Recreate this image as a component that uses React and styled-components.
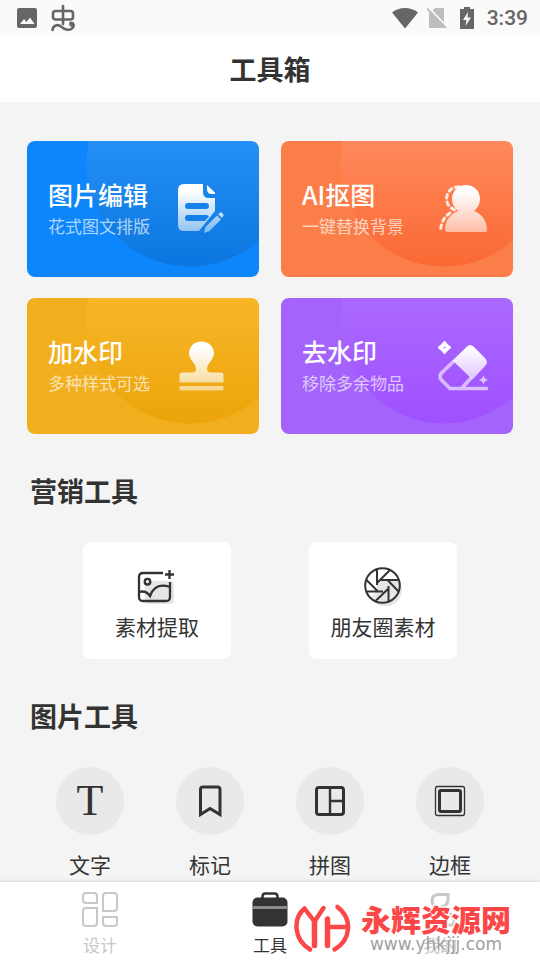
import React, { useState } from "react";
import styled, { createGlobalStyle } from "styled-components";

const features = [
  {
    title: "图片编辑",
    text: "花式图文排版",
    base: "#0e86fb",
    from: "#248ff5",
    to: "#0b76df",
    icon: "document"
  },
  {
    title: "AI抠图",
    text: "一键替换背景",
    base: "#fb7e49",
    from: "#ff895c",
    to: "#fa6933",
    icon: "person"
  },
  {
    title: "加水印",
    text: "多种样式可选",
    base: "#f1af1e",
    from: "#f8b628",
    to: "#eba40a",
    icon: "stamp"
  },
  {
    title: "去水印",
    text: "移除多余物品",
    base: "#a464fb",
    from: "#ab69ff",
    to: "#9f50ff",
    icon: "eraser"
  }
];

const featureIcons = {
  document: (
    <>
      <path
        fillRule="evenodd"
        d="M9 7H28V15Q28 21 34 21H40V34L24 54H9Q3 54 3 48V13Q3 7 9 7ZM13 26A3 3 0 0 0 13 32H31A3 3 0 0 0 31 26ZM13 38A3 3 0 0 0 13 44H30L34 39.5L32 38Z"
      />
      <path d="M32 8L40 15.5V17H37Q32 17 32 12Z" />
      <path d="M29 56L30.5 50L42 38.5L46 42.5L34.5 54Z" opacity="0.9" />
      <path d="M43.3 37.2L45 35.5Q46 35 47 36L48.5 37.5Q49 38.5 48 39.5L46.8 41Z" />
    </>
  ),
  person: (
    <>
      <path d="M37 8C45 8 51 14 51 22C51 27 49 31 45 34C53 37 58 44 58 53Q58 55 56 55H18Q16 55 16 53C16 44 21 37 29 34C25 31 23 27 23 22C23 14 29 8 37 8Z" />
      <path
        d="M30 9.8C22 10 17.7 15 17.7 22C17.7 27 20.5 31 27 33.5M21 36C15 40 12 46 11.5 54"
        fill="none"
        stroke="#fff"
        strokeWidth="3"
        strokeDasharray="3.5 4"
        strokeLinecap="round"
        opacity="0.85"
      />
    </>
  ),
  stamp: (
    <>
      <path d="M26.5 7.5C34 7.5 39 13 39 19.5C39 26 32 29 32 35Q32 38.5 36 38.5H46Q48.5 38.5 48.5 41V48.5H4.5V41Q4.5 38.5 7 38.5H17Q21 38.5 21 35C21 29 14 26 14 19.5C14 13 19 7.5 26.5 7.5Z" />
      <rect x="4.5" y="52" width="44" height="4.5" rx="1" />
    </>
  ),
  eraser: (
    <>
      <path d="M38 12.5Q41 9.5 44.5 12.5L56 24Q59.5 28 56.5 31.5L43.5 45.5L23.5 26.5Z" />
      <path
        fillRule="evenodd"
        d="M15.5 7L18.5 10.5L22 13.5L18.5 16.5L15.5 20L12.5 16.5L9 13.5L12.5 10.5ZM15.5 12L14 13.5L15.5 15L17 13.5Z"
        stroke="#fff"
        strokeWidth="1"
        strokeLinejoin="round"
      />
      <path
        d="M24 28L12.5 39Q9.5 42.5 12.5 46L21 54.5H57.5M32.5 54.5L41.5 44.5"
        fill="none"
        stroke="#fff"
        strokeWidth="3.6"
        strokeLinecap="round"
        opacity="0.6"
      />
      <path d="M54.5 41.5L56 44.5L59 46L56 47.5L54.5 50.5L53 47.5L50 46L53 44.5Z" />
    </>
  )
};

const FeatureCard = ({ title, text, base, from, to, icon }) => (
  <Card $base={base} $from={from} $to={to}>
    <CardText>
      <CardTitle>{title}</CardTitle>
      <CardSubtitle>{text}</CardSubtitle>
    </CardText>
    <svg width="64" height="64" viewBox="0 0 64 64" aria-hidden="true">
      <defs>
        <linearGradient
          id={`fade-${icon}`}
          gradientUnits="userSpaceOnUse"
          x1="0"
          y1="14"
          x2="0"
          y2="58"
        >
          <stop offset="0" stopColor="#fff" />
          <stop offset="1" stopColor="#fff" stopOpacity="0.5" />
        </linearGradient>
      </defs>
      <g fill={`url(#fade-${icon})`}>{featureIcons[icon]}</g>
    </svg>
  </Card>
);

const ImagePlusIcon = () => (
  <svg width="40" height="40" viewBox="0 0 40 40" aria-hidden="true">
    <rect x="8" y="15" width="29" height="23" rx="4" fill="#e6e6e6" />
    <g fill="none" stroke="#333" strokeWidth="2.3">
      <path d="M26 7H6Q2 7 2 11V31Q2 35 6 35H29Q33 35 33 31V16" />
      <circle cx="10.5" cy="15.7" r="2.8" />
      <path d="M2 26Q9 24 13 30Q18 16 33 21M32.5 4V13M28 8.5H37" />
    </g>
  </svg>
);

const ApertureIcon = () => (
  <svg width="40" height="40" viewBox="0 0 40 40" aria-hidden="true">
    <circle cx="22.5" cy="24" r="16.5" fill="#e6e6e6" />
    <circle cx="19.5" cy="19.5" r="17.3" fill="#fff" />
    <path d="M14 14L27 13L36 14A17 17 0 0 1 19 36L8 31L14 25Z" fill="#e6e6e6" />
    <g fill="none" stroke="#333" strokeWidth="2">
      <circle cx="19.5" cy="19.5" r="17.3" />
      <path d="M14 3.5V19M18 14H36M25.5 20V35.5M3.5 25.5H20M26.5 4.5L14 17M36 26L24.5 14M12.5 35L25.5 22.5M3 13.5L15 25.5" />
    </g>
  </svg>
);

const toolIcons = {
  bookmark: (
    <path
      d="M10.5 4H25.500Q28 4 28 6.500V31.500L18 25.500L8.500 31.500V6.500Q8.500 4 11 4Z"
      strokeWidth="3"
    />
  ),
  collage: (
    <>
      <rect x="4.5" y="4.5" width="27" height="27" rx="2.5" strokeWidth="3" />
      <path d="M18 4V32M18 18H32" strokeWidth="2.4" />
    </>
  ),
  frame: (
    <>
      <rect x="3.5" y="3.5" width="29" height="29" rx="2" strokeWidth="1.3" />
      <rect x="7.5" y="7.5" width="21" height="21" rx="1.5" strokeWidth="3" />
    </>
  )
};

const tools = [
  { label: "文字", icon: "text" },
  { label: "标记", icon: "bookmark" },
  { label: "拼图", icon: "collage" },
  { label: "边框", icon: "frame" }
];

const Tool = ({ label, icon }) => (
  <ToolButton>
    <ToolCircle>
      {icon === "text" ? (
        <Letter>T</Letter>
      ) : (
        <svg
          width="36"
          height="36"
          viewBox="0 0 36 36"
          fill="none"
          stroke="#333"
          aria-hidden="true"
        >
          {toolIcons[icon]}
        </svg>
      )}
    </ToolCircle>
    <span>{label}</span>
  </ToolButton>
);

const navItems = [
  {
    label: "设计",
    icon: (
      <g fill="none" stroke="currentColor" strokeWidth="2">
        <path d="M4 2H12Q15 2 15 5V12H4Q1 12 1 9V5Q1 2 4 2Z" />
        <path d="M24 2H32Q35 2 35 5V17Q35 20 32 20H21V5Q21 2 24 2Z" />
        <path d="M4 17H15V32Q15 35 12 35H4Q1 35 1 32V20Q1 17 4 17Z" />
        <path d="M21 26H35V32Q35 35 32 35H24Q21 35 21 32Z" />
      </g>
    )
  },
  {
    label: "工具",
    icon: (
      <>
        <path
          d="M10.500 8V5.500Q10.500 2.500 13.500 2.500H22.500Q25.500 2.500 25.500 5.500V8"
          fill="none"
          stroke="currentColor"
          strokeWidth="2.5"
        />
        <rect x="0.5" y="6.5" width="35" height="29" rx="5" fill="currentColor" />
        <path d="M0.5 16.5H35.5" stroke="#8c8c8c" strokeWidth="3" />
      </>
    )
  },
  {
    label: "我的",
    icon: (
      <g fill="none" stroke="currentColor" strokeWidth="3">
        <path d="M26 3.5H17Q10 3.5 10 9.5Q10 16 17.5 16Q26 16 26 8Z" />
        <path d="M5 34V29Q5 22 12 22H24Q32 22 32 29V34Z" />
      </g>
    )
  }
];

const Watermark = () => (
  <WatermarkBox>
    <svg
      width="58"
      height="50"
      viewBox="0 0 58 50"
      fill="none"
      stroke="#fb4747"
      strokeWidth="4.5"
      strokeLinecap="round"
      strokeLinejoin="round"
      aria-hidden="true"
    >
      <path d="M16 46.5C-1 36 -1 15 10.5 5.5L20.5 18.5L29.5 5" />
      <path d="M20.5 18.5V42.5M33.5 16V42.5" strokeWidth="5.5" />
      <path d="M33.5 24H53M43.5 4C59 16 57 37 40.5 46.5" />
    </svg>
    <WatermarkText>
      <WatermarkName>永辉资源网</WatermarkName>
      <WatermarkUrl>www.yhkjjj.com</WatermarkUrl>
    </WatermarkText>
  </WatermarkBox>
);

const StatusBar = () => (
  <Status>
    <StatusGroup $gap={14}>
      <svg width="20" height="20" viewBox="0 0 20 20" aria-hidden="true">
        <rect width="20" height="20" rx="2" fill="#666" />
        <path d="M3 16L7 11L9.500 14L13 9.500L17.500 16Z" fill="#fafafa" />
      </svg>
      <svg
        width="25"
        height="28"
        viewBox="0 0 25 28"
        fill="none"
        stroke="#666"
        strokeWidth="2.6"
        strokeLinecap="round"
        aria-hidden="true"
      >
        <rect x="2" y="7" width="20" height="8.5" rx="2.5" />
        <path d="M12 2V20M1.500 26C2 21 7 20 10 22.500C14 26 19 27 21.500 24C24 21 22 18.500 19.500 19" />
        <circle cx="20.5" cy="20.5" r="1" />
      </svg>
    </StatusGroup>
    <StatusGroup $gap={9}>
      <svg width="26" height="22" viewBox="0 0 26 22" aria-hidden="true">
        <path d="M0 5.500C7 -0.500 19 -0.500 26 5.500L13 21.500Z" fill="#666" />
      </svg>
      <svg width="20" height="22" viewBox="0 0 20 22" aria-hidden="true">
        <path d="M8 1H17V21H3Q2 21 2 20V7Z" fill="#bdbdbd" />
        <path d="M1 0L20 20" stroke="#fafafa" strokeWidth="2" />
        <path d="M0 1.500L19 21" stroke="#bdbdbd" strokeWidth="2" />
      </svg>
      <svg width="22" height="22" viewBox="0 0 22 22" aria-hidden="true">
        <path d="M8 0H14V2H18V22H4V2H8Z" fill="#666" />
        <path d="M12 5L7 13H10.500L9.500 19L15 10.500H11.500Z" fill="#fafafa" />
      </svg>
      <Clock>3:39</Clock>
    </StatusGroup>
  </Status>
);

const App = () => {
  const [active, setActive] = useState("工具");
  return (
    <Screen>
      <GlobalStyle />
      <StatusBar />
      <Header>
        <h1>工具箱</h1>
      </Header>
      <Content>
        <CardGrid>
          {features.map(feature => (
            <FeatureCard key={feature.icon} {...feature} />
          ))}
        </CardGrid>
        <SectionTitle>营销工具</SectionTitle>
        <TileGrid>
          <Tile>
            <ImagePlusIcon />
            素材提取
          </Tile>
          <Tile>
            <ApertureIcon />
            朋友圈素材
          </Tile>
        </TileGrid>
        <SectionTitle>图片工具</SectionTitle>
        <ToolGrid>
          {tools.map(tool => (
            <Tool key={tool.icon} {...tool} />
          ))}
        </ToolGrid>
      </Content>
      <Nav>
        {navItems.map(item => (
          <NavButton
            key={item.label}
            $active={active === item.label}
            onClick={() => setActive(item.label)}
          >
            <svg width="36" height="36" viewBox="0 0 36 36" aria-hidden="true">
              {item.icon}
            </svg>
            {item.label}
          </NavButton>
        ))}
        <Watermark />
      </Nav>
    </Screen>
  );
};

export default App;

const GlobalStyle = createGlobalStyle`
  * {
    box-sizing: border-box;
  }

  body {
    margin: 0;
    background: #f4f4f4;
    color: #333;
    font-family: "Noto Sans CJK SC", sans-serif;
  }

  button {
    padding: 0;
    border: 0;
    background: none;
    color: inherit;
    font: inherit;
    cursor: pointer;
  }

  svg {
    display: block;
    flex: none;
  }
`;

const Screen = styled.div`
  display: flex;
  flex-direction: column;
  height: 100vh;
`;

const Status = styled.div`
  display: flex;
  flex: none;
  align-items: center;
  justify-content: space-between;
  height: 36px;
  padding: 0 12px 0 17px;
  background: #fafafa;
`;

const StatusGroup = styled.div`
  display: flex;
  align-items: center;
  gap: ${props => props.$gap}px;
`;

const Clock = styled.span`
  color: #666;
  font-family: Roboto, sans-serif;
  font-size: 21px;
  font-weight: 500;
`;

const Header = styled.header`
  flex: none;
  padding: 15px 0;
  background: #fff;
  text-align: center;

  h1 {
    margin: 0;
    font-size: 27px;
    font-weight: 700;
    line-height: 36px;
  }
`;

const Content = styled.main`
  flex: 1;
  min-height: 0;
  padding-top: 39px;
  overflow-y: auto;
  scrollbar-width: none;
`;

const CardGrid = styled.div`
  display: grid;
  grid-template-columns: 1fr 1fr;
  gap: 21px 22px;
  padding: 0 27px;
`;

const Card = styled.button`
  && {
    display: flex;
    align-items: center;
    justify-content: space-between;
    min-height: 136px;
    padding: 0 20px 0 21px;
    border-radius: 8px;
    background: radial-gradient(
        circle at 163px 22px,
        transparent 103px,
        ${props => props.$base} 104px
      ),
      linear-gradient(${props => props.$from}, ${props => props.$to} 92%);
    color: #fff;
    text-align: left;
  }

  svg {
    margin-left: -20px;
  }
`;

const CardText = styled.span`
  display: flex;
  flex-direction: column;
  padding-bottom: 2px;
  white-space: nowrap;
`;

const CardTitle = styled.span`
  font-size: 25px;
  font-weight: 500;
  line-height: 36px;
`;

const CardSubtitle = styled.span`
  font-size: 17px;
  line-height: 28px;
  opacity: 0.65;
`;

const SectionTitle = styled.h2`
  margin: 39px 30px 33px;
  font-size: 27px;
  font-weight: 700;
  line-height: 36px;
`;

const TileGrid = styled.div`
  display: grid;
  grid-template-columns: 1fr 1fr;
  justify-items: center;
  padding: 0 44px;
`;

const Tile = styled.button`
  && {
    display: flex;
    flex-direction: column;
    align-items: center;
    gap: 6px;
    min-width: 148px;
    padding: 24px 16px 19px;
    border-radius: 8px;
    background: #fff;
    font-size: 21px;
    line-height: 28px;
  }
`;

const ToolGrid = styled.div`
  display: grid;
  grid-template-columns: repeat(4, 1fr);
  padding: 0 30px;
`;

const ToolButton = styled.button`
  && {
    display: flex;
    flex-direction: column;
    align-items: center;
    gap: 15px;
    font-size: 21px;
    line-height: 28px;
  }
`;

const ToolCircle = styled.span`
  display: flex;
  align-items: center;
  justify-content: center;
  width: 68px;
  height: 68px;
  border-radius: 50%;
  background: #e9e9e9;
`;

const Letter = styled.span`
  font-family: "Liberation Serif", serif;
  font-size: 44px;
  line-height: 48px;
`;

const Nav = styled.nav`
  position: relative;
  display: grid;
  flex: none;
  grid-template-columns: repeat(3, 1fr);
  padding: 9px 15px 3px;
  background: #fff;
  box-shadow: 0 -1px 3px rgba(0, 0, 0, 0.12);
`;

const NavButton = styled.button`
  && {
    display: flex;
    flex-direction: column;
    align-items: center;
    gap: 6px;
    color: ${props => (props.$active ? "#333" : "#c8c8c8")};
    font-size: 17px;
    line-height: 24px;
  }
`;

/* printed over the bar, taps go through to the buttons below */
const WatermarkBox = styled.div`
  position: absolute;
  right: 29px;
  bottom: 6px;
  display: flex;
  align-items: center;
  gap: 9px;
  pointer-events: none;
`;

const WatermarkText = styled.div`
  display: flex;
  flex-direction: column;
  align-items: center;
`;

const WatermarkName = styled.span`
  color: #fb4747;
  font-size: 30px;
  font-weight: 900;
  line-height: 32px;
  -webkit-text-stroke: 3px #fff;
  paint-order: stroke fill;
`;

const WatermarkUrl = styled.span`
  color: #a0a0a0;
  font-family: "DejaVu Sans", sans-serif;
  font-size: 17px;
  line-height: 20px;
`;
